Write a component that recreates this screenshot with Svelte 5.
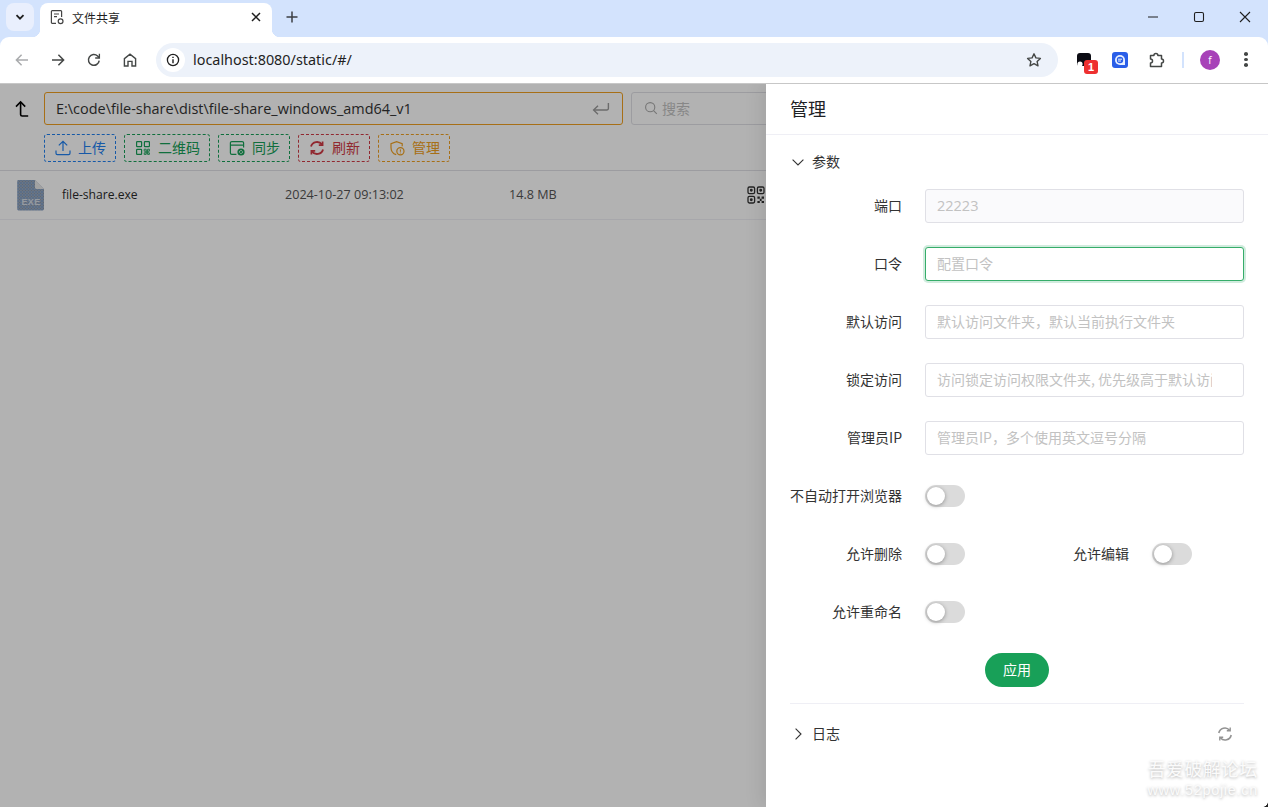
<script>
  const actions = [
    { key: 'up', label: '上传', color: '#2080f0' },
    { key: 'qr', label: '二维码', color: '#18a058' },
    { key: 'sync', label: '同步', color: '#18a058' },
    { key: 'refresh', label: '刷新', color: '#d03a45' },
    { key: 'manage', label: '管理', color: '#f0a020' }
  ];
  const fields = [
    { label: '端口', value: '22223', disabled: true },
    { label: '口令', placeholder: '配置口令', focus: true },
    { label: '默认访问', placeholder: '默认访问文件夹，默认当前执行文件夹' },
    { label: '锁定访问', placeholder: '访问锁定访问权限文件夹, 优先级高于默认访问文件夹' },
    { label: '管理员IP', placeholder: '管理员IP，多个使用英文逗号分隔' }
  ];
</script>

<div class="win">
  <div class="tabstrip">
    <div class="tablist">
      <svg width="12" height="12" viewBox="0 0 12 12"><path d="M2.5 4.2 6 7.7l3.5-3.5" fill="none" stroke="#1f1f1f" stroke-width="1.8"/></svg>
    </div>
    <div class="tab">
      <svg class="favicon" width="16" height="16" viewBox="0 0 16 16" fill="none" stroke="#444" stroke-width="1.2">
        <path d="M7 14.4H3.2a.8.8 0 0 1-.8-.8V2.4a.8.8 0 0 1 .8-.8h8.6a.8.8 0 0 1 .8.8V8"/>
        <path d="M5 5h5M5 7.6h3"/>
        <circle cx="11.6" cy="12.2" r="2.4"/>
      </svg>
      <span class="tabtitle">文件共享</span>
      <svg class="tabx" width="10" height="10" viewBox="0 0 10 10"><path d="M1 1l8 8M9 1l-8 8" stroke="#1f1f1f" stroke-width="1.5"/></svg>
    </div>
    <svg class="plus" width="12" height="12" viewBox="0 0 12 12"><path d="M6 .5v11M.5 6h11" stroke="#3c3f43" stroke-width="1.5"/></svg>
    <div class="winbtns">
      <svg width="12" height="12" viewBox="0 0 12 12"><path d="M1 6h10" stroke="#1f1f1f"/></svg>
      <svg width="12" height="12" viewBox="0 0 12 12"><rect x="1.5" y="1.5" width="9" height="9" rx="1.5" fill="none" stroke="#1f1f1f" stroke-width="1.1"/></svg>
      <svg width="12" height="12" viewBox="0 0 12 12"><path d="M1 1l10 10M11 1 1 11" stroke="#1f1f1f" stroke-width="1.1"/></svg>
    </div>
  </div>

  <div class="toolbar">
    <div class="navs">
      <svg width="16" height="16" viewBox="0 0 16 16" fill="none" stroke="#a9abad" stroke-width="1.5"><path d="M14 8H2.5M7.6 2.8 2.4 8l5.2 5.2"/></svg>
      <svg width="16" height="16" viewBox="0 0 16 16" fill="none" stroke="#444746" stroke-width="1.5"><path d="M2 8h11.5M8.4 2.8 13.6 8l-5.2 5.2"/></svg>
      <svg width="16" height="16" viewBox="0 0 16 16" fill="none" stroke="#444746" stroke-width="1.5"><path d="M13.2 8.6A5.4 5.4 0 1 1 11.6 4l1.6 1.6"/><path d="M13.4 1.8v4.2H9.2" stroke-width="1.3"/></svg>
      <svg width="16" height="16" viewBox="0 0 16 16" fill="none" stroke="#444746" stroke-width="1.4"><path d="M2.4 14V6.6L8 2.2l5.6 4.4V14H10V9.4H6V14z"/></svg>
    </div>
    <div class="omni">
      <span class="infobadge">
        <svg width="14" height="14" viewBox="0 0 14 14" fill="none"><circle cx="7" cy="7" r="5.6" stroke="#1f1f1f" stroke-width="1.3"/><path d="M7 6.2v4M7 3.8v1.3" stroke="#1f1f1f" stroke-width="1.4"/></svg>
      </span>
      <span class="url">localhost:8080/static/#/</span>
      <svg class="star" width="16" height="16" viewBox="0 0 16 16"><path d="M8 1.8l1.9 4.1 4.5.5-3.3 3 .9 4.4L8 11.6l-4 2.2.9-4.4-3.3-3 4.5-.5z" fill="none" stroke="#444746" stroke-width="1.4" stroke-linejoin="round"/></svg>
    </div>
    <div class="exts">
      <span class="ext ext1">
        <svg width="16" height="16" viewBox="0 0 16 16"><rect x="1" y="1" width="14" height="13" rx="3" fill="#0c0c14"/><circle cx="4" cy="12" r="2.6" fill="#fff"/></svg>
        <b class="badge">1</b>
      </span>
      <span class="ext ext2">
        <svg width="16" height="16" viewBox="0 0 16 16"><rect width="16" height="16" rx="3" fill="#2a5ee8"/><path d="M8 3a5 5 0 1 0 0 10h5V8a5 5 0 0 0-5-5z" fill="#e8f0ff"/><circle cx="8" cy="8" r="3.2" fill="#2a5ee8"/><path d="M6 7.2h4M6 9h3" stroke="#e8f0ff"/></svg>
      </span>
      <span class="ext ext3">
        <svg width="18" height="18" viewBox="0 0 18 18"><path d="M2.5 4.5h3.4a2 2 0 0 1 4 0h3.6v3.4a2 2 0 0 1 0 4v3.6h-11V12a2 2 0 0 0 0-4z" fill="none" stroke="#444746" stroke-width="1.5" stroke-linejoin="round"/></svg>
      </span>
      <span class="sep"></span>
      <span class="avatar">f</span>
      <span class="kebab"><i></i><i></i><i></i></span>
    </div>
  </div>

  <div class="page">
    <div class="tools">
      <div class="pathrow">
        <svg class="upicon" width="16" height="18" viewBox="0 0 16 18" fill="none" stroke="#000" stroke-width="1.6"><path d="M2 6.6 6.6 2l4.6 4.6"/><path d="M6.6 2v12.4a1.6 1.6 0 0 0 1.6 1.6h6"/></svg>
        <div class="pathinput">
          <span>E:\code\file-share\dist\file-share_windows_amd64_v1</span>
          <svg width="18" height="14" viewBox="0 0 18 14" fill="none" stroke="#9a9a9a" stroke-width="1.4"><path d="M16.4 1v5.6a1.4 1.4 0 0 1-1.4 1.4H2"/><path d="M6 3.8 1.6 8 6 12.2"/></svg>
        </div>
        <div class="search">
          <svg width="14" height="14" viewBox="0 0 14 14" fill="none" stroke="#aaa" stroke-width="1.1"><circle cx="6.2" cy="6.2" r="4.6"/><path d="M9.6 9.6l3.2 3.2"/></svg>
          <span>搜索</span>
        </div>
      </div>
      <div class="actions">
        {#each actions as a}
          <button class="act" style="--c:{a.color}">
            <svg width="16" height="16" viewBox="0 0 16 16" fill="none" stroke={a.color} stroke-width="1.2">
              {#if a.key === 'up'}
                <path d="M8 11V1.6M3.8 5.4 8 1.4l4.2 4M1 10.6v2.6a1.4 1.4 0 0 0 1.4 1.4h11.2a1.4 1.4 0 0 0 1.4-1.4v-2.6"/>
              {:else if a.key === 'qr'}
                <rect x="1.6" y="1.6" width="5" height="5" rx=".6"/><rect x="9.4" y="1.6" width="5" height="5" rx=".6"/><rect x="1.6" y="9.4" width="5" height="5" rx=".6"/>
                <path d="M9.2 9.2h2v2h-2zM12.6 9.2h1.8v2h-1.8zM11.2 11.2h1.4v1.6h-1.4zM9.2 12.8h2v1.6h-2zM12.6 12.8h1.8v1.6h-1.8z" stroke-width=".9"/>
              {:else if a.key === 'sync'}
                <path d="M7.4 14.4H2.8a1.4 1.4 0 0 1-1.4-1.4V3a1.4 1.4 0 0 1 1.4-1.4h10.4A1.4 1.4 0 0 1 14.6 3v4.4M1.4 5.2h13.2"/>
                <circle cx="12" cy="12" r="3.6" fill={a.color} stroke="none"/>
                <path d="M10.4 12.4a1.6 1.6 0 0 1 3-1M13.6 11.6a1.6 1.6 0 0 1-3 1" stroke="#fff" stroke-width=".8"/>
              {:else if a.key === 'refresh'}
                <path d="M2 6.6A6.2 6.2 0 0 1 13 4.6M14 9.4A6.2 6.2 0 0 1 3 11.4" stroke-width="1.9"/>
                <path d="M13.6 1.4v3.8H9.8M2.4 14.6v-3.8h3.8" stroke-width="1.7"/>
              {:else}
                <path d="M7.2 14.6C4 13.6 2 11 2 7.4V3.6l5.6-2 5.6 2v2.6"/>
                <circle cx="11.4" cy="11.2" r="3.6"/>
                <path d="M11.4 9.4v2.4M11.4 12.6v.8" stroke-width="1"/>
              {/if}
            </svg>
            <span>{a.label}</span>
          </button>
        {/each}
      </div>
    </div>
    <div class="filerow">
      <svg class="exe" width="28" height="32" viewBox="0 0 28 32">
        <defs>
          <pattern id="dots" width="3" height="3" patternUnits="userSpaceOnUse">
            <rect width="3" height="3" fill="#9aa8bc"/>
            <circle cx="1" cy="1" r=".8" fill="#6a93cc"/>
            <circle cx="2.4" cy="2.4" r=".5" fill="#7e8ea4"/>
          </pattern>
        </defs>
        <path d="M1.6 1H18l9 9v20a1.4 1.4 0 0 1-1.4 1.4H1.6A1.4 1.4 0 0 1 .2 30V2.4A1.4 1.4 0 0 1 1.6 1z" fill="url(#dots)"/>
        <path d="M18 1l9 9h-7.6A1.4 1.4 0 0 1 18 8.6z" fill="#e8e8e8"/>
        <text x="14" y="26" text-anchor="middle" class="exetext">EXE</text>
      </svg>
      <span class="fname">file-share.exe</span>
      <span class="fdate">2024-10-27 09:13:02</span>
      <span class="fsize">14.8 MB</span>
      <svg class="rowqr" width="18" height="18" viewBox="0 0 18 18" fill="none" stroke="#333" stroke-width="1.3">
        <rect x="1" y="1" width="6.6" height="6.6" rx="1.4"/><rect x="10.4" y="1" width="6.6" height="6.6" rx="1.4"/><rect x="1" y="10.4" width="6.6" height="6.6" rx="1.4"/>
        <circle cx="4.3" cy="4.3" r=".8" fill="#333"/><circle cx="13.7" cy="4.3" r=".8" fill="#333"/><circle cx="4.3" cy="13.7" r=".8" fill="#333"/>
        <path d="M10.4 10.4h2.4v2.4h-2.4zM14.6 10.4H17v2.4h-2.4zM12.8 12.8h1.8v2.2h-1.8zM10.4 15h2.4v2h-2.4zM14.6 15H17v2h-2.4z" fill="#333" stroke="none"/>
      </svg>
    </div>

    <div class="mask"></div>

    <aside class="drawer">
      <header class="dhead">管理</header>
      <div class="dbody">
        <div class="colhead">
          <svg width="16" height="16" viewBox="0 0 16 16" fill="none" stroke="#333" stroke-width="1.1"><path d="M2.6 5.6 8 11l5.4-5.4"/></svg>
          <span>参数</span>
        </div>
        <div class="form">
          {#each fields as f}
            <div class="row">
              <label class="lbl" for={f.label}>{f.label}</label>
              <input id={f.label} class="inp" class:focus={f.focus} value={f.value ?? ''} placeholder={f.placeholder ?? ''} disabled={f.disabled} />
            </div>
          {/each}
          <div class="row">
            <span class="lbl">不自动打开浏览器</span>
            <span class="sw"><i></i></span>
          </div>
          <div class="row">
            <span class="lbl">允许删除</span>
            <span class="sw"><i></i></span>
            <span class="lbl second">允许编辑</span>
            <span class="sw"><i></i></span>
          </div>
          <div class="row">
            <span class="lbl">允许重命名</span>
            <span class="sw"><i></i></span>
          </div>
        </div>
        <div class="applywrap"><button class="apply">应用</button></div>
        <div class="logs">
          <svg width="16" height="16" viewBox="0 0 16 16" fill="none" stroke="#333" stroke-width="1.1"><path d="M5.6 2.6 11 8l-5.4 5.4"/></svg>
          <span>日志</span>
          <svg class="logsync" width="16" height="16" viewBox="0 0 16 16" fill="none" stroke="#939393" stroke-width="1.6"><path d="M1.8 7a6.2 6.2 0 0 1 10.8-2.8M14.2 9a6.2 6.2 0 0 1-10.8 2.8"/><path d="M13.2 1.4v3.4H9.8M2.8 14.6v-3.4h3.4" stroke-width="1.4"/></svg>
        </div>
      </div>
    </aside>

    <div class="wm"><div class="wm1">吾爱破解论坛</div><div class="wm2">www.52pojie.cn</div></div>
    <div class="corner"></div>
  </div>
</div>

<style>
  :global(body) { margin: 0; background: #fff; }
  .win {
    width: 1268px; height: 807px; display: flex; flex-direction: column; overflow: hidden;
    font-family: "Open Sans", "Noto Sans CJK SC", sans-serif; color: #333;
    background: #d3e3fd;
  }
  svg { display: block; flex: none; }

  .tabstrip { height: 37px; flex: none; display: flex; align-items: flex-start; padding-left: 6px; box-sizing: border-box; }
  .tablist { width: 28px; height: 28px; margin-top: 3px; border-radius: 8px; background: #e9effd; display: flex; align-items: center; justify-content: center; }
  .tab { position: relative; margin: 3px 0 0 6px; width: 232px; height: 34px; background: #fff; border-radius: 8px 8px 0 0; display: flex; align-items: center; padding: 0 11px 6px 9px; box-sizing: border-box; }
  .tab::before, .tab::after { content: ""; position: absolute; bottom: 0; width: 8px; height: 8px; }
  .tab::before { left: -8px; background: radial-gradient(circle at 0 0, transparent 8px, #fff 8.5px); }
  .tab::after { right: -8px; background: radial-gradient(circle at 100% 0, transparent 8px, #fff 8.5px); }
  .tabtitle { margin-left: 7px; font-size: 12px; color: #1f1f1f; flex: 1; font-family: "Noto Sans CJK SC", sans-serif; }
  .plus { margin: 11px 0 0 14px; }
  .winbtns { margin-left: auto; display: flex; margin-top: 11px; gap: 34px; padding-right: 17px; }

  .toolbar { height: 47px; flex: none; background: #fff; border-radius: 9px 9px 0 0; border-bottom: 1px solid #c7c7c7; box-sizing: border-box; display: flex; align-items: center; padding-bottom: 1px; }
  .navs { display: flex; gap: 20px; padding-left: 14px; width: 156px; box-sizing: border-box; flex: none; }
  .omni { width: 902px; height: 34px; flex: none; border-radius: 17px; background: #edf2fa; display: flex; align-items: center; padding: 0 16px 0 5px; box-sizing: border-box; }
  .infobadge { width: 24px; height: 24px; border-radius: 50%; background: #fff; display: flex; align-items: center; justify-content: center; }
  .url { margin-left: 8px; font-size: 14.4px; color: #1f1f1f; flex: 1; font-family: "Noto Sans", sans-serif; }
  .exts { display: flex; align-items: center; flex: 1; padding-left: 18px; }
  .ext { position: relative; width: 16px; height: 16px; display: block; margin-right: 20px; }
  .ext3 { margin-right: 18px; margin-left: 0; }
  .ext3 svg { margin-top: -1px; }
  .badge { position: absolute; left: 8px; top: 8px; width: 14px; height: 14px; border-radius: 3px; background: #ee3030; color: #fff; font: 700 11px/14px "Liberation Sans", sans-serif; text-align: center; }
  .sep { width: 2px; height: 16px; background: #d3e3fd; margin-right: 16px; }
  .avatar { width: 20px; height: 20px; border-radius: 50%; background: #a742b8; color: #fff; font-size: 10px; line-height: 20px; text-align: center; margin-right: 24px; }
  .kebab { display: flex; flex-direction: column; gap: 2px; }
  .kebab i { width: 4px; height: 3.5px; border-radius: 50%; background: #444746; }

  .page { position: relative; flex: 1; background: #fff; overflow: hidden; }
  .tools { height: 87px; border-bottom: 1px solid #e0e0e6; box-sizing: border-box; padding: 8px 12px 0 14px; }
  .pathrow { display: flex; align-items: center; }
  .upicon { margin-right: 14px; }
  .pathinput { width: 579px; height: 33px; box-sizing: border-box; border: 1px solid #f0a020; border-radius: 3px; display: flex; align-items: center; justify-content: space-between; padding: 0 12px 0 11px; font-size: 14.45px; color: #333; }
  .search { margin-left: 8px; flex: 1; height: 33px; box-sizing: border-box; border: 1px solid #e0e0e6; border-radius: 3px; display: flex; align-items: center; gap: 4px; padding: 0 0 2px 12px; font-size: 14px; color: #c2c2c2; font-family: "Noto Sans CJK SC", sans-serif; }
  .actions { display: flex; gap: 8px; margin: 9px 0 0 30px; }
  .act { height: 28px; padding: 0 9px 2px 10px; border: 1px dashed var(--c); border-radius: 3px; background: transparent; color: var(--c); display: flex; align-items: center; gap: 7px; font: 14px "Noto Sans CJK SC", sans-serif; box-sizing: border-box; }
  .act svg { width: 16px; height: 16px; margin-top: 2px; }

  .filerow { height: 49px; border-bottom: 1px solid #efeff5; box-sizing: border-box; position: relative; display: grid; grid-template-columns: 223px 224px 238px 18px; align-items: center; padding: 0 0 2px 62px; font-size: 12px; }
  .exe { position: absolute; left: 17px; top: 8px; }
  .exetext { font: 700 9px "Liberation Sans", sans-serif; fill: #d6dde6; letter-spacing: .4px; }
  .fname { color: #2a2a2a; font-size: 12.1px; }
  .fdate, .fsize { color: #555; font-size: 12.6px; }
  .rowqr { margin-top: 2px; }

  .mask { position: absolute; inset: 0; background: rgba(0,0,0,.3); }
  .drawer { position: absolute; top: 0; right: 0; bottom: 0; width: 502px; background: #fff; display: flex; flex-direction: column; box-shadow: -6px 0 16px rgba(0,0,0,.08); font-family: "Noto Sans CJK SC", sans-serif; }
  .dhead { height: 51px; flex: none; border-bottom: 1px solid #efeff5; box-sizing: border-box; padding-left: 24px; font-size: 18px; line-height: 48px; color: #1f2225; }
  .dbody { padding: 0 24px; flex: 1; }
  .colhead { height: 54px; display: flex; align-items: center; gap: 6px; font-size: 14px; color: #333; padding-bottom: 2px; box-sizing: border-box; }
  .colhead svg { margin-top: 1px; }
  .form { display: flex; flex-direction: column; }
  .row { height: 58px; display: flex; align-items: flex-start; flex: none; }
  .lbl { width: 112px; height: 34px; line-height: 32px; text-align: right; font-size: 14px; color: #333; margin-right: 23px; white-space: nowrap; flex: none; }
  .second { margin-left: 52px; width: 112px; margin-right: 23px; }
  .inp { width: 319px; height: 34px; box-sizing: border-box; border: 1px solid #e0e0e6; border-radius: 3px; padding: 0 31px 2px 11px; font: 14px "Noto Sans CJK SC", sans-serif; outline: none; background: #fff; color: #333; }
  .inp::placeholder { color: #c2c2c2; opacity: 1; }
  .inp:disabled { background: #fafafc; color: #c2c2c2; font: 14.5px "Open Sans", sans-serif; }
  .inp.focus { border-color: #36ad6a; box-shadow: 0 0 0 2px rgba(24,160,88,.2); }
  .sw { width: 40px; height: 22px; border-radius: 11px; background: rgba(0,0,0,.14); position: relative; margin-top: 6px; flex: none; }
  .sw i { position: absolute; left: 2px; top: 2px; width: 18px; height: 18px; border-radius: 50%; background: #fff; box-shadow: 0 1px 4px rgba(0,0,0,.35); }
  .applywrap { display: flex; justify-content: center; height: 50px; }
  .apply { width: 64px; height: 34px; border: 0; border-radius: 17px; background: #18a058; color: #fff; font: 14px "Noto Sans CJK SC", sans-serif; padding: 0 0 2px; }
  .logs { border-top: 1px solid #efeff5; height: 60px; display: flex; align-items: center; gap: 6px; font-size: 14px; color: #333; box-sizing: border-box; padding-bottom: 1px; }
  .logs svg { margin-top: 1px; }
  .logsync { margin-left: auto; margin-right: 11px; }

  .wm { position: absolute; right: 10px; bottom: 7px; text-align: center; color: #fbfbfb; text-shadow: 0 1px 3px rgba(0,0,0,.3); font-family: "Noto Sans CJK SC", sans-serif; }
  .wm1 { font-size: 18px; line-height: 24px; letter-spacing: 0.3px; }
  .wm2 { font: 14.5px/20px "Liberation Sans", sans-serif; letter-spacing: .7px; }
  .corner { position: absolute; right: 0; bottom: 0; width: 5px; height: 5px; background: radial-gradient(circle at 0 0, transparent 4.5px, #222 5px); }
</style>
